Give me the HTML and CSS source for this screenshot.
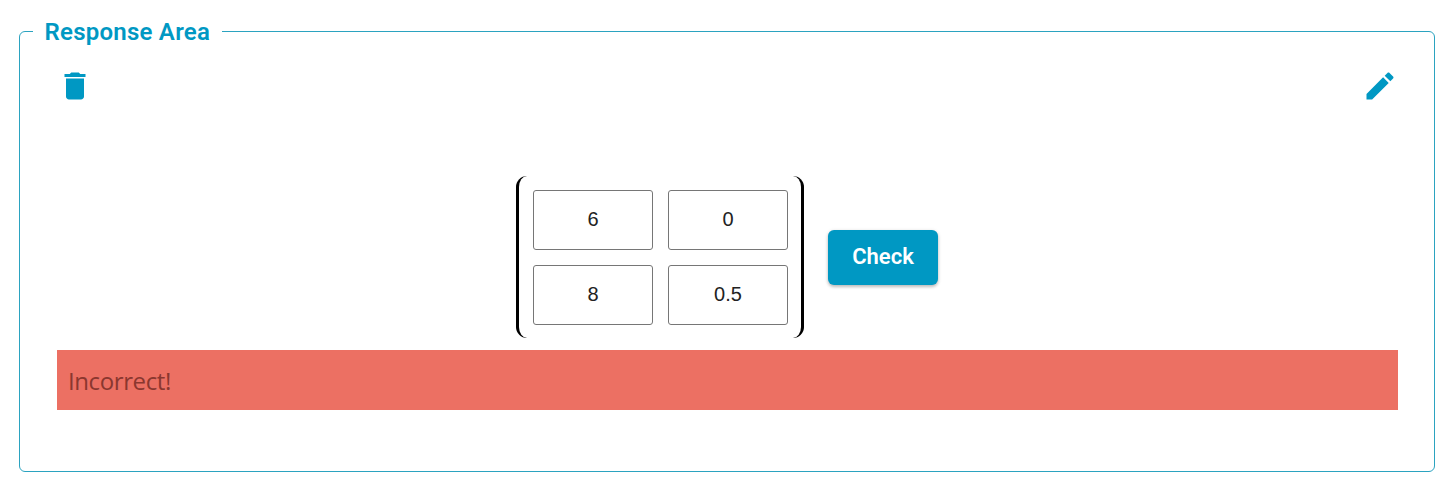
FILE: index.html
```html
<!DOCTYPE html>
<html lang="en">
<head>
<meta charset="utf-8">
<title>Response Area</title>
<link rel="stylesheet" href="styles.css">
</head>
<body>
<fieldset class="area">
  <legend class="area-title">Response Area</legend>
  <div class="toolbar">
    <svg class="icon" viewBox="0 0 24 24"><path d="M6 19c0 1.100.9 2 2 2h8c1.100 0 2-.9 2-2V7H6v12zM19 4h-3.500l-1-1h-5l-1 1H5v2h14V4z"/></svg>
    <svg class="icon" viewBox="0 0 24 24"><path d="M3 17.250V21h3.750L17.810 9.940l-3.750-3.750L3 17.250zM20.710 7.040c.39-.39.39-1.020 0-1.410l-2.340-2.340c-.39-.39-1.020-.39-1.410 0l-1.830 1.830 3.750 3.750 1.830-1.830z"/></svg>
  </div>
  <div class="answer">
    <div class="matrix">
      <span class="bracket bracket-left"></span>
      <div class="cells">
        <div class="cell">6</div>
        <div class="cell">0</div>
        <div class="cell">8</div>
        <div class="cell">0.5</div>
      </div>
      <span class="bracket bracket-right"></span>
    </div>
    <button class="check" type="button">Check</button>
  </div>
  <div class="feedback">Incorrect!</div>
</fieldset>
</body>
</html>
```
FILE: styles.css
```css
* { box-sizing: border-box; }
body {
  margin: 0;
  padding: 19px 17px 0 19px;
  background: #fff;
  font-family: Roboto, sans-serif;
}
.area {
  height: 453px;
  margin: 0;
  padding: 0 36px 0 37px;
  border: 1px solid #2ba3c0;
  border-radius: 6px;
}
.area-title {
  height: 25px;
  margin-left: -24px;
  padding: 0 11.5px;
  color: #0098c3;
  font-size: 24px;
  font-weight: 600;
  letter-spacing: .24px;
  line-height: 27px;
}
.toolbar {
  display: flex;
  justify-content: space-between;
  padding-top: 24px;
}
.icon {
  display: block;
  width: 36px;
  height: 36px;
  fill: #0098c3;
}
.answer {
  display: flex;
  justify-content: center;
  align-items: center;
  gap: 24px;
  margin-top: 72px;
  padding-right: 1px;
}
.matrix {
  display: flex;
  gap: 5px;
  height: 162px;
}
.bracket { width: 11px; }
.bracket-left {
  margin-right: 1px;
  border-left: 3px solid #000;
  border-radius: 12px 0 0 12px;
}
.bracket-right {
  border-right: 3px solid #000;
  border-radius: 0 12px 12px 0;
}
.cells {
  display: grid;
  grid-template-columns: 120px 120px;
  grid-template-rows: 60px 60px;
  gap: 15px;
  padding-top: 14px;
}
.cell {
  border: 1px solid #767676;
  border-radius: 3px;
  color: #222;
  font: 20px/56px "Liberation Sans", Arial, sans-serif;
  text-align: center;
}
.check {
  width: 110px;
  height: 55px;
  padding: 0 0 1px;
  border: 0;
  border-radius: 6px;
  background: #0098c3;
  box-shadow: 0 2px 3px rgba(0, 0, 0, .18), 0 1px 4px rgba(0, 0, 0, .14);
  color: #fff;
  font: 600 22px Roboto, sans-serif;
}
.feedback {
  height: 60px;
  margin-top: 12px;
  padding: 0 11px;
  background: #ec7063;
  color: #8a372f;
  font: 24px/62px "Open Sans", "Noto Sans", sans-serif;
  letter-spacing: -.4px;
}
```
